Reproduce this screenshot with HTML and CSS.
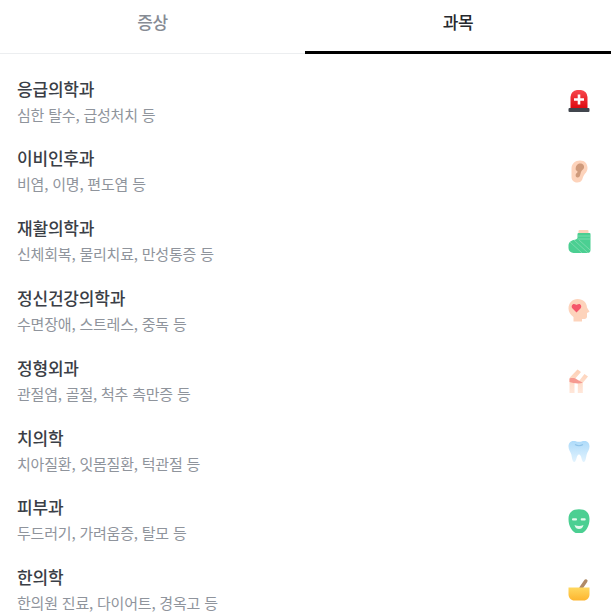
FILE: index.html
```html
<!DOCTYPE html>
<html lang="ko">
<head>
<meta charset="utf-8">
<title>과목</title>
<link rel="stylesheet" href="styles.css">
</head>
<body>
<div class="page">
  <nav class="tabs">
    <div class="tab">증상</div>
    <div class="tab active">과목</div>
  </nav>
  <ul class="list">
    <li class="row">
      <div class="text"><div class="name">응급의학과</div><div class="desc">심한 탈수, 급성처치 등</div></div>
      <svg class="icon" viewBox="0 0 24 24"><defs><linearGradient id="r" x1="0" y1="0" x2="0" y2="1"><stop offset="0" stop-color="#f8484e"/><stop offset="1" stop-color="#de0a10"/></linearGradient></defs><path d="M3.500 18V7A7 7 0 0 1 10 0h4a7 7 0 0 1 6.500 7v11z" fill="url(#r)"/><path d="M10.700 4.500h2.600v3.700H17v2.600h-3.700v3.700h-2.600v-3.700H7V8.200h3.700z" fill="#fff"/><rect x="1.500" y="18" width="21" height="4" rx="1" fill="#41464e"/></svg>
    </li>
    <li class="row">
      <div class="text"><div class="name">이비인후과</div><div class="desc">비염, 이명, 편도염 등</div></div>
      <svg class="icon" viewBox="0 0 24 24"><path d="M13 .5c5 0 7.500 3.500 7.500 7.500 0 4-3 5.500-4.200 8.500-1.100 2.800-1.300 6-6 6-3.800 0-5.800-2.600-5.800-5.500V8.500C4.500 4 8 .5 13 .5z" fill="#fdd3bb"/><path d="M13 3.500c3 0 4.500 2 4 4.200-.4 1.800-2.300 2.400-3 4.300-.7 2-.8 5.500-3.200 5.500-1.900 0-2.500-1.800-2-3.200.4-1.100 1.700-1.300 1.800-2.500.1-.9-1.800-1.100-1.900-2.300C8.500 6 10.500 3.500 13 3.500z" fill="#cf9a7b"/></svg>
    </li>
    <li class="row">
      <div class="text"><div class="name">재활의학과</div><div class="desc">신체회복, 물리치료, 만성통증 등</div></div>
      <svg class="icon" viewBox="0 0 24 24"><path d="M11.500 4V2a1 1 0 0 1 1-1h8a1 1 0 0 1 1 1v2z" fill="#fdd3bb"/><path d="M10.500 5a1 1 0 0 1 1-1h11a1 1 0 0 1 1 1v16a3 3 0 0 1-3 3H6.500a5 5 0 0 1-5-5v-2.500c0-3 2.500-5 5-5.500 2-.4 4-1 4-2.500z" fill="#4bcf92"/><path d="M10.500 7H23.500M10.500 10H23.500M3 13l12 11M7 11l14 13M12 11l11 10" stroke="#8fe0b8" stroke-width=".7" fill="none"/></svg>
    </li>
    <li class="row">
      <div class="text"><div class="name">정신건강의학과</div><div class="desc">수면장애, 스트레스, 중독 등</div></div>
      <svg class="icon" viewBox="0 0 24 24"><path d="M10.500 0c6 0 9.300 3.800 9.500 8.500l2.500 4.300-2.500 1.200v3.500c0 1.500-1 2.500-2.500 2.500h-2.500v2.500H6.500v-4.500C3.500 16 1.500 13 1.500 9.500 1.500 4 5.500 0 10.500 0z" fill="#fdd3bb"/><path d="M9.500 13.500 5.300 9.300C4 7.500 5 5 7 5c1.200 0 2.500 1 2.500 1S10.800 5 12 5c2 0 3 2.500 1.700 4.300z" fill="#f5566a"/></svg>
    </li>
    <li class="row">
      <div class="text"><div class="name">정형외과</div><div class="desc">관절염, 골절, 척추 측만증 등</div></div>
      <svg class="icon" viewBox="0 0 24 24"><defs><linearGradient id="k" x1="0" y1="0" x2="0" y2="1"><stop offset="0" stop-color="#fdd0b6"/><stop offset="1" stop-color="#ffe7da"/></linearGradient></defs><path d="M10.500.5 14 3 7.500 10.500V24h-5V10c0-.8.300-1.500.8-2zM17.500 5 21 7.500l-5.200 6.300V24h-5V13.500z" fill="url(#k)"/><path d="M2.500 9.500C5.500 8.700 8 9 10 10.500l5.800 3.300C12 15 6 14.500 2.500 13z" fill="#f69a90"/></svg>
    </li>
    <li class="row">
      <div class="text"><div class="name">치의학</div><div class="desc">치아질환, 잇몸질환, 턱관절 등</div></div>
      <svg class="icon" viewBox="0 0 24 24"><defs><linearGradient id="t" x1="0" y1="0" x2="0" y2="1"><stop offset="0" stop-color="#aedbfa"/><stop offset="1" stop-color="#e2f3fe"/></linearGradient></defs><path d="M6.500 2c2.500 0 3.500.8 5.500.8S15 2 17.500 2c3.500 0 5 2.700 5 5.500 0 3.500-2 5-2.800 8-.6 2.500-1 7.500-3 7.500-2.300 0-2-7.500-4.700-7.500S9.600 23 7.300 23c-2 0-2.400-5-3-7.500-.8-3-2.800-4.500-2.800-8C1.500 4.700 3 2 6.500 2z" fill="url(#t)"/><path d="M8 5.500c2.500 1.500 5.500 1.500 8 0" stroke="#8fc3e8" stroke-width="1.100" fill="none"/></svg>
    </li>
    <li class="row">
      <div class="text"><div class="name">피부과</div><div class="desc">두드러기, 가려움증, 탈모 등</div></div>
      <svg class="icon" viewBox="0 0 24 24"><path d="M12 .3c6.500 0 10.500 3.200 10.500 9.700 0 3.500-.7 6.500-2.500 9.500-2 3.400-4.800 5.200-8 5.200s-6-1.800-8-5.200C2.200 16.500 1.500 13.500 1.500 10 1.500 3.500 5.500.3 12 .3z" fill="#4bcf92"/><rect x="5" y="9.300" width="5" height="2.200" rx="1" fill="#e4f9ee"/><rect x="13.700" y="9.300" width="5" height="2.200" rx="1" fill="#e4f9ee"/><path d="M7.500 16c3 1.200 6 1.200 9 0-.8 3-2.500 4-4.500 4s-3.700-1-4.500-4z" fill="#e4f9ee"/></svg>
    </li>
    <li class="row">
      <div class="text"><div class="name">한의학</div><div class="desc">한의원 진료, 다이어트, 경옥고 등</div></div>
      <svg class="icon" viewBox="0 0 24 24"><path d="M14 10 18.800 3" stroke="#b08a66" stroke-width="3.500" stroke-linecap="round"/><defs><linearGradient id="b" x1="0" y1="0" x2="0" y2="1"><stop offset="0" stop-color="#ffd85f"/><stop offset="1" stop-color="#fdb52f"/></linearGradient></defs><path d="M1.500 9.500h21v6.500c0 4-2.500 6.500-6 6.500h-9c-3.500 0-6-2.500-6-6.500z" fill="url(#b)"/></svg>
    </li>
  </ul>
</div>
</body>
</html>
```

FILE: styles.css
```css
* { box-sizing: border-box; }
html, body { margin: 0; padding: 0; background: #fff; overflow: hidden; }
body { font-family: "Noto Sans CJK KR", "Noto Sans", sans-serif; }
.page { width: 611px; height: 616px; overflow: hidden; }
.tabs { display: flex; height: 54px; border-bottom: 1px solid #eceef0; }
.tab { flex: 1 1 0; height: 54px; padding-top: 11px; text-align: center; font-size: 17px; line-height: 22px; letter-spacing: -0.3px; font-weight: 500; color: #868b94; }
.tab.active { flex-basis: 1px; color: #25282d; border-bottom: 3px solid #000; }
.list { list-style: none; margin: 0; padding: 13px 0 0; }
.row { display: flex; align-items: center; justify-content: space-between; height: 69.800px; padding: 0 20px 0 17px; }
.name { font-size: 17px; line-height: 26px; letter-spacing: -0.2px; font-weight: 500; color: #3a3e46; }
.desc { font-size: 15px; line-height: 26.500px; letter-spacing: -0.2px; color: #8f949c; }
.icon { width: 24px; height: 24px; flex: none; }
```
